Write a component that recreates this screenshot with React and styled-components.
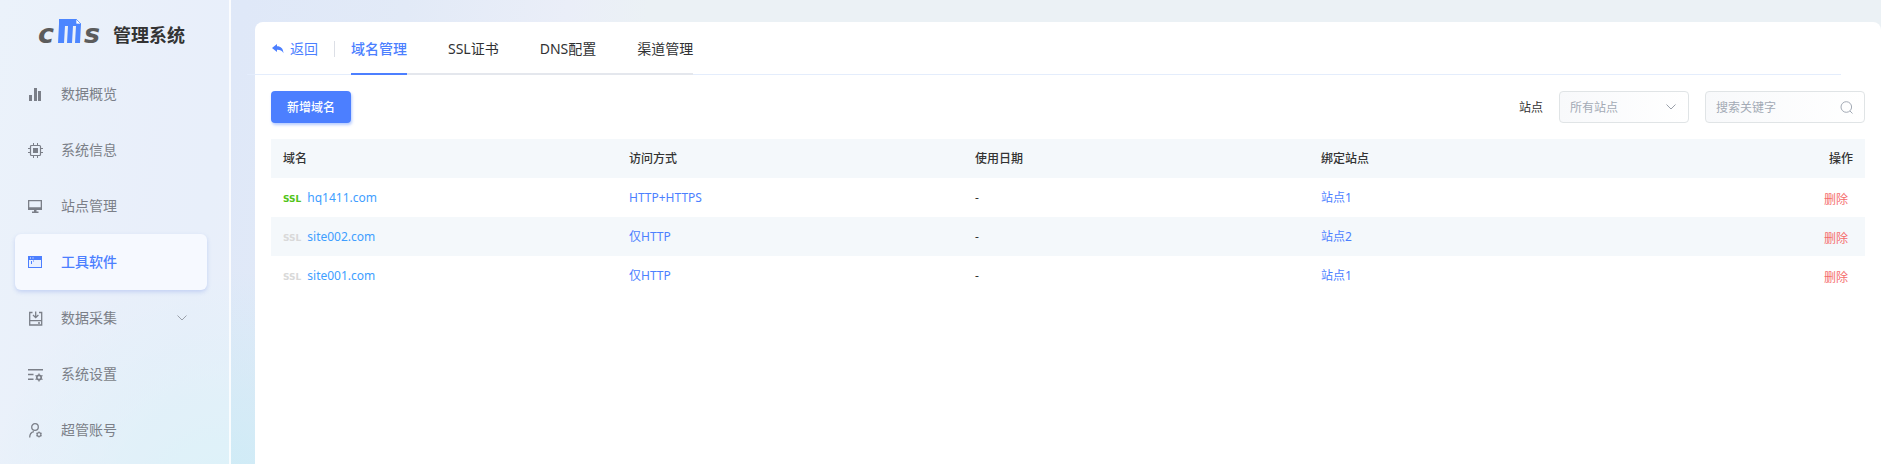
import React, { useState } from 'react';
import styled, { createGlobalStyle, css } from 'styled-components';

const GlobalStyle = createGlobalStyle`
  * {
    box-sizing: border-box;
  }

  body {
    margin: 0;
    min-height: 100vh;
    font-family: 'Noto Sans', 'Noto Sans CJK SC', sans-serif;
    font-size: 12px;
    color: #333;
    background:
      radial-gradient(circle at 220px 500px, #cdecf6 0, rgba(205, 236, 246, 0) 230px),
      linear-gradient(100deg, #e2ecf8 0, #dfe8f8 240px, #e2eaf7 400px, #eaeef8 560px, #ebf1f5 640px);
  }

  button,
  input,
  select {
    font-family: inherit;
  }
`;

const Layout = styled.div`
  display: flex;
  min-height: 100vh;
`;

const Sidebar = styled.aside`
  flex: none;
  width: 231px;
  padding: 0 22px 0 15px;
  border-right: 2px solid rgba(255, 255, 255, 0.8);
  background: rgba(255, 255, 255, 0.3);
`;

const Brand = styled.div`
  display: flex;
  align-items: flex-end;
  gap: 11px;
  height: 66px;
  padding: 0 0 16px 21px;
`;

const BrandName = styled.h1`
  margin: 0;
  font-size: 18px;
  line-height: 30px;
  font-weight: 700;
  white-space: nowrap;
  color: #333;
`;

const MenuItem = styled.a`
  display: flex;
  align-items: center;
  height: 56px;
  padding: 0 19px 0 13px;
  border-radius: 6px;
  font-size: 14px;
  color: #7b7f88;
  text-decoration: none;

  & > svg:first-child {
    width: 15px;
    height: 15px;
    margin-right: 18px;
  }

  ${({ $active }) =>
    $active &&
    css`
      background: #f6f9ff;
      box-shadow: 0 2px 4px rgba(110, 140, 230, 0.3);
      color: #4c7fff;
      font-weight: 500;
    `}
`;

const MenuText = styled.span`
  flex: 1;
  padding-bottom: 2px;
`;

const Main = styled.main`
  flex: 1;
  display: flex;
  min-width: 0;
  padding: 22px 0 0 24px;
`;

const Card = styled.section`
  flex: 1;
  min-width: 0;
  border-radius: 8px 8px 0 0;
  background: #fff;
`;

const CardHeader = styled.header`
  display: flex;
  align-items: center;
  height: 53px;
  margin: 0 40px 0 -8px;
  padding-left: 24px;
  box-shadow: inset 0 -1px #e4edfc;
`;

const BackLink = styled.a`
  display: flex;
  align-items: center;
  gap: 6px;
  padding-left: 1px;
  font-size: 14px;
  color: #4c7fff;
  text-decoration: none;

  span {
    padding-bottom: 2px;
  }
`;

const Divider = styled.span`
  width: 1px;
  height: 16px;
  margin: 0 16px;
  background: #dcdfe6;
`;

const Tabs = styled.nav`
  display: flex;
  align-self: stretch;
  gap: 41px;
  box-shadow: inset 0 -2px #e4e7ed;
`;

const Tab = styled.button`
  padding: 0;
  border: 0;
  border-bottom: 2px solid ${({ $active }) => ($active ? '#4c7fff' : 'transparent')};
  background: none;
  font-size: 14px;
  font-weight: ${({ $active }) => ($active ? 500 : 400)};
  color: ${({ $active }) => ($active ? '#4c7fff' : '#303133')};
  cursor: pointer;
`;

const CardBody = styled.div`
  padding: 16px;
`;

const Toolbar = styled.div`
  display: flex;
  align-items: center;
  justify-content: space-between;
  margin-bottom: 16px;
`;

const PrimaryButton = styled.button`
  width: 80px;
  height: 32px;
  padding: 0;
  border: 0;
  border-radius: 4px;
  background: #4c7fff;
  box-shadow: 1px 2px 3px rgba(76, 127, 255, 0.4);
  font-size: 12px;
  font-weight: 500;
  color: #fff;
  cursor: pointer;
`;

const Filters = styled.div`
  display: flex;
  align-items: center;
  gap: 16px;
`;

const Field = styled.div`
  position: relative;
  width: ${({ $width }) => $width}px;
  height: 32px;

  svg {
    position: absolute;
    top: 10px;
    right: 12px;
    pointer-events: none;
  }
`;

const control = css`
  width: 100%;
  height: 32px;
  padding: 0 32px 0 10px;
  border: 1px solid #e0e4e6;
  border-radius: 4px;
  outline: none;
  background: linear-gradient(90deg, #f8f9fb, #fff);
  font-size: 12px;
  color: #a3aab5;
`;

const Select = styled.select`
  ${control}
  appearance: none;
`;

const SearchInput = styled.input`
  ${control}

  &::placeholder {
    color: #a3aab5;
    opacity: 1;
  }
`;

const Table = styled.table`
  width: 100%;
  border-collapse: collapse;
  table-layout: fixed;

  th,
  td {
    height: 39px;
    padding: 0 12px;
    text-align: left;
    line-height: 16px;
  }

  td {
    padding-top: 1px;
  }

  th {
    background: #f4f8fb;
    font-weight: 500;
    color: #333;
  }

  th:last-child {
    width: 210px;
    text-align: right;
  }

  td:last-child {
    padding: 4px 17px 0 0;
    text-align: right;
  }

  tbody tr:nth-child(even) {
    background: #f4f8fb;
  }
`;

const SslBadge = styled.span`
  margin-right: 6px;
  font-family: 'DejaVu Sans', Verdana, sans-serif;
  font-size: 9px;
  font-weight: 700;
  color: ${({ $on }) => ($on ? '#52c41a' : '#d9d9d9')};
`;

const CellLink = styled.a`
  color: ${({ $tone }) => ($tone === 'domain' ? '#409eff' : '#4c7fff')};
  text-decoration: none;
`;

const DeleteButton = styled.button`
  padding: 0;
  border: 0;
  background: none;
  font-size: 12px;
  line-height: 16px;
  color: #f56c6c;
  cursor: pointer;
`;

const LogoSvg = styled.svg`
  flex: none;
  overflow: visible;
`;

function Logo() {
  return (
    <LogoSvg width="66" height="40" viewBox="0 -7 66 40" role="img" aria-label="cms">
      <g fill="#5c5c5c" fontFamily="DejaVu Sans" fontWeight="700" fontStyle="italic" fontSize="27">
        <text x="2" y="26">c</text>
        <text x="48" y="26">s</text>
      </g>
      {/* document with a folded corner */}
      <path fill="#4c86ff" d="M23 2h17l5 5-1 19h-5l1-17h-3l-1 17h-5l1-17h-3l-1 17h-6l1-19z" />
      <path fill="#fff" stroke="#4c86ff" strokeWidth="0.7" d="M40 2v5h5z" />
    </LogoSvg>
  );
}

function BarsIcon() {
  return (
    <svg viewBox="0 0 15 15" fill="currentColor">
      <path d="M1 8h3v6H1zM6 1h3v13H6zM10 4h3v10h-3z" />
    </svg>
  );
}

function ChipIcon() {
  return (
    <svg viewBox="0 0 15 15" fill="none" stroke="currentColor">
      <rect x="2.5" y="2.5" width="10" height="10" rx="1" strokeWidth="1.2" />
      <rect x="5" y="5" width="5" height="5" fill="currentColor" stroke="none" />
      <path d="M5.500 0v2M9.500 0v2M5.500 13v2M9.500 13v2M0 5.500h2M0 9.500h2M13 5.500h2M13 9.500h2" />
    </svg>
  );
}

function MonitorIcon() {
  return (
    <svg viewBox="0 0 15 15" fill="currentColor">
      <path fillRule="evenodd" d="M0 1h14v10H0zM1.300 2.300v6h11.400v-6z" />
      <path d="M6 11h2.500v2H6zM4 12.500h6.500V14H4z" />
    </svg>
  );
}

function WindowIcon() {
  return (
    <svg viewBox="0 0 15 15">
      <path fill="currentColor" d="M0 1h14v12H0z" />
      <path fill="#eaf1ff" d="M1 5h12v7H1z" />
      <path fill="#fff" d="M2 2.500h1v1H2zM4.500 2.500h1v1h-1z" />
      <path fill="currentColor" d="M3 6h1v3H3zM5 5h.5v2H5z" />
    </svg>
  );
}

function CollectIcon() {
  return (
    <svg viewBox="0 0 15 15" fill="none" stroke="currentColor" strokeWidth="1.300">
      <path d="M4.500 1.500H1.700v12.500h12V1.500H11M1.700 9.700h12M7.700 0.500v6M5 4l2.700 2.700L10.400 4" />
      <path d="M10 12h2" />
    </svg>
  );
}

function ListSettingsIcon() {
  return (
    <svg viewBox="0 0 15 15" fill="none" stroke="currentColor">
      <path d="M0 2.700h15M0 7.500h5.500M0 12.300h5.500" strokeWidth="1.500" />
      <circle cx="11" cy="10.500" r="2.200" strokeWidth="1.700" />
      <path d="M11 6.500v1.500M11 13v1.500M7.500 8.500l1.300.7M13.200 11.800l1.300.7M7.500 12.500l1.300-.7M13.200 9.200l1.300-.7" strokeWidth="1.300" />
    </svg>
  );
}

function UserSettingsIcon() {
  return (
    <svg viewBox="0 0 15 15" fill="none" stroke="currentColor">
      <circle cx="7" cy="4" r="3.300" strokeWidth="1.300" />
      <path d="M1.700 14.500c0-3.300 1.700-5.300 4.300-5.800" strokeWidth="1.300" />
      <circle cx="11" cy="11.500" r="1.900" strokeWidth="1.200" />
      <path d="M11 8.500v1M11 13.500v1M8.400 10l.9.500M12.700 12.500l.9.500M8.400 13l.9-.5M12.700 10.500l.9-.5" strokeWidth="1.100" />
    </svg>
  );
}

function ChevronIcon() {
  return (
    <svg width="12" height="12" viewBox="0 0 12 12" fill="none" stroke="#9aa0aa">
      <path d="M1.500 3.500L6 8l4.500-4.500" />
    </svg>
  );
}

function SearchIcon() {
  return (
    <svg width="13" height="13" viewBox="0 0 13 13" fill="none" stroke="#a3aab5">
      <circle cx="6.300" cy="6" r="5.300" />
      <path d="M10 10l2.500 2.500" />
    </svg>
  );
}

function BackIcon() {
  return (
    <svg width="12" height="10" viewBox="0 0 12 10" fill="currentColor">
      <path d="M0 4L5 0v2.300c4 0 6 2 6.500 7C10 6.500 8 5.700 5 5.800V8z" />
    </svg>
  );
}

const menu = [
  { text: '数据概览', Icon: BarsIcon },
  { text: '系统信息', Icon: ChipIcon },
  { text: '站点管理', Icon: MonitorIcon },
  { text: '工具软件', Icon: WindowIcon, active: true },
  { text: '数据采集', Icon: CollectIcon, expandable: true },
  { text: '系统设置', Icon: ListSettingsIcon },
  { text: '超管账号', Icon: UserSettingsIcon },
];

const tabs = ['域名管理', 'SSL证书', 'DNS配置', '渠道管理'];

const domains = [
  { name: 'hq1411.com', ssl: true, access: 'HTTP+HTTPS', date: '-', site: '站点1' },
  { name: 'site002.com', ssl: false, access: '仅HTTP', date: '-', site: '站点2' },
  { name: 'site001.com', ssl: false, access: '仅HTTP', date: '-', site: '站点1' },
];

function App() {
  const [activeTab, setActiveTab] = useState('域名管理');
  const [keyword, setKeyword] = useState('');

  return (
    <>
      <GlobalStyle />
      <Layout>
        <Sidebar>
          <Brand>
            <Logo />
            <BrandName>管理系统</BrandName>
          </Brand>
          <nav>
            {menu.map(({ text, Icon, active, expandable }) => (
              <MenuItem key={text} href="#" $active={active}>
                <Icon />
                <MenuText>{text}</MenuText>
                {expandable && <ChevronIcon />}
              </MenuItem>
            ))}
          </nav>
        </Sidebar>
        <Main>
          <Card>
            <CardHeader>
              <BackLink href="#">
                <BackIcon />
                <span>返回</span>
              </BackLink>
              <Divider />
              <Tabs>
                {tabs.map((tab) => (
                  <Tab key={tab} $active={tab === activeTab} onClick={() => setActiveTab(tab)}>
                    {tab}
                  </Tab>
                ))}
              </Tabs>
            </CardHeader>
            <CardBody>
              <Toolbar>
                <PrimaryButton>新增域名</PrimaryButton>
                <Filters>
                  <label htmlFor="site">站点</label>
                  <Field $width={130}>
                    <Select id="site">
                      <option>所有站点</option>
                      <option>站点1</option>
                      <option>站点2</option>
                    </Select>
                    <ChevronIcon />
                  </Field>
                  <Field $width={160}>
                    <SearchInput
                      type="text"
                      aria-label="搜索关键字"
                      placeholder="搜索关键字"
                      value={keyword}
                      onChange={(e) => setKeyword(e.target.value)}
                    />
                    <SearchIcon />
                  </Field>
                </Filters>
              </Toolbar>
              <Table>
                <thead>
                  <tr>
                    <th>域名</th>
                    <th>访问方式</th>
                    <th>使用日期</th>
                    <th>绑定站点</th>
                    <th>操作</th>
                  </tr>
                </thead>
                <tbody>
                  {domains.map((item) => (
                    <tr key={item.name}>
                      <td>
                        <SslBadge $on={item.ssl}>SSL</SslBadge>
                        <CellLink href="#" $tone="domain">{item.name}</CellLink>
                      </td>
                      <td>
                        <CellLink href="#">{item.access}</CellLink>
                      </td>
                      <td>{item.date}</td>
                      <td>
                        <CellLink href="#">{item.site}</CellLink>
                      </td>
                      <td>
                        <DeleteButton>删除</DeleteButton>
                      </td>
                    </tr>
                  ))}
                </tbody>
              </Table>
            </CardBody>
          </Card>
        </Main>
      </Layout>
    </>
  );
}

export default App;
